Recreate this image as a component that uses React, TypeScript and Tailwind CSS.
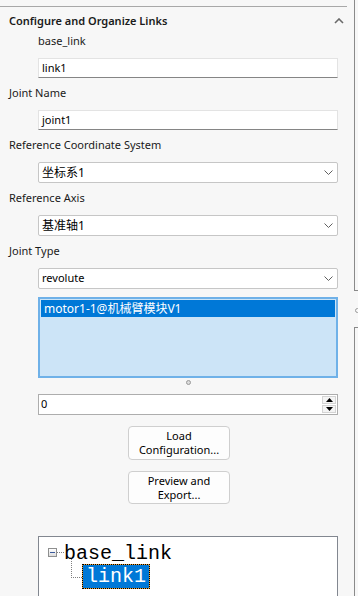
import React from "react";

function ChevronDown() {
  return (
    <svg width="9" height="5" viewBox="0 0 9 5" className="shrink-0">
      <polyline points="0.5,0.5 4.5,4.5 8.5,0.5" fill="none" stroke="#606060" strokeWidth="1" />
    </svg>
  );
}

function Label({ children }: { children: React.ReactNode }) {
  return (
    <div className="mt-[7px] h-[16px] pl-[9px] text-[11px] leading-[16px] text-[#1a1a1a]">
      {children}
    </div>
  );
}

function TextBox({ value }: { value: string }) {
  return (
    <div className="ml-[38px] mt-[9px] flex h-[20px] w-[300px] items-center border border-[#e3e3e3] border-b-[#858585] bg-white pl-[3px] text-[11px] text-black">
      {value}
    </div>
  );
}

function Combo({ value }: { value: string }) {
  return (
    <div className="ml-[38px] mt-[9px] flex h-[21px] w-[300px] items-center justify-between rounded-[2px] border border-[#c6c6c6] bg-white pl-[3px] pr-[4px] text-[12px] text-black">
      <span>{value}</span>
      <ChevronDown />
    </div>
  );
}

export default function App() {
  return (
    <div className="flex h-[596px] w-[358px] overflow-hidden bg-[#f7f7f7] font-['Noto_Sans','Noto_Sans_CJK_SC',sans-serif]">
      <div className="flex w-[354px] flex-col [&>*]:shrink-0">
        <div className="mt-[6px] h-px w-[347px] bg-[#a8a8a8]" />

        <div className="mt-[6px] flex h-[16px] items-center justify-between pl-[9px] pr-[10px]">
          <span className="text-[11px] font-semibold leading-[16px] text-[#1a1a1a]">Configure and Organize Links</span>
          <svg width="10" height="6" viewBox="0 0 10 6">
            <polyline points="1,5 5,1 9,5" fill="none" stroke="#6a6a6a" strokeWidth="1.6" />
          </svg>
        </div>

        <div className="mt-[4px] h-[16px] pl-[38px] text-[11px] leading-[16px] text-[#1a1a1a]">base_link</div>
        <TextBox value="link1" />

        <Label>Joint Name</Label>
        <TextBox value="joint1" />

        <Label>Reference Coordinate System</Label>
        <Combo value="坐标系1" />

        <Label>Reference Axis</Label>
        <Combo value="基准轴1" />

        <Label>Joint Type</Label>
        <div className="ml-[38px] mt-[9px] flex h-[21px] w-[300px] items-center justify-between rounded-[2px] border border-[#c6c6c6] bg-white pl-[3px] pr-[4px] text-[11px] text-black">
          <span>revolute</span>
          <ChevronDown />
        </div>

        <div className="ml-[38px] mt-[8px] h-[81px] w-[300px] border-2 border-[#6fb1e8] bg-[#cce4f7] p-px">
          <div className="flex h-[17px] items-center bg-[#0078d7] pl-[3px] text-[12px] text-white">
            motor1-1@机械臂模块V1
          </div>
        </div>

        <div className="mt-[2px] flex justify-center pl-[22px]">
          <div className="h-[5px] w-[5px] rounded-full border border-[#9a9a9a] bg-[#dcdcdc]" />
        </div>

        <div className="ml-[38px] mt-[9px] flex h-[21px] w-[300px] items-center justify-between border border-[#adadad] bg-white pl-[2px] pr-px text-[11px] text-black">
          <span>0</span>
          <div className="flex flex-col gap-px">
            <div className="flex h-[8px] w-[14px] items-center justify-center border border-[#d4d4d4] bg-[#f4f4f4]">
              <svg width="7" height="4" viewBox="0 0 7 4">
                <polygon points="0,4 3.5,0 7,4" fill="#000" />
              </svg>
            </div>
            <div className="flex h-[8px] w-[14px] items-center justify-center border border-[#d4d4d4] bg-[#f4f4f4]">
              <svg width="7" height="4" viewBox="0 0 7 4">
                <polygon points="0,0 3.5,4 7,0" fill="#000" />
              </svg>
            </div>
          </div>
        </div>

        <button className="ml-[128px] mt-[11px] flex h-[34px] w-[102px] flex-col items-center justify-center rounded-[4px] border border-[#cfcfcf] bg-[#fdfdfd] text-[11px] leading-[14px] text-black">
          <span>Load</span>
          <span>Configuration...</span>
        </button>
        <button className="ml-[128px] mt-[11px] flex h-[33px] w-[102px] flex-col items-center justify-center rounded-[4px] border border-[#cfcfcf] bg-[#fdfdfd] text-[11px] leading-[14px] text-black">
          <span>Preview and</span>
          <span>Export...</span>
        </button>

        <div className="ml-[38px] mt-[32px] h-[80px] w-[300px] border border-[#828790] bg-white pl-[9px] pt-[6px] font-['Liberation_Mono',monospace]">
          <div className="flex h-[21px] items-start">
            <div className="mt-[5px] flex h-[9px] w-[9px] items-center justify-center border border-[#8e8f8f] bg-gradient-to-b from-[#ffffff] to-[#dcdcdc]">
              <div className="h-px w-[5px] bg-[#3a5a9a]" />
            </div>
            <div className="mt-[9px] w-[7px] border-t border-dotted border-[#808080]" />
            <span className="text-[20px] leading-[21px] text-black">base_link</span>
          </div>
          <div className="flex">
            <div className="-mt-[7px] ml-[23px] h-[21px] w-[11px] border-b border-l border-dotted border-[#808080]" />
            <div className="h-[25px] border border-[#f0a030] bg-[#0078d7] px-[3px] text-[20px] leading-[23px] text-white outline-1 -outline-offset-1 outline-dotted outline-black">
              link1
            </div>
          </div>
        </div>
      </div>

      <div className="flex w-[4px] flex-col">
        <div className="h-[291px] shrink-0 border-b border-l border-[#8a8a8a]" />
        <div className="mt-[17px] ml-px h-[5px] w-[5px] shrink-0 rounded-full border border-[#9a9a9a]" />
        <div className="mt-[14px] flex-1 border-l border-t border-[#8a8a8a]" />
      </div>
    </div>
  );
}
